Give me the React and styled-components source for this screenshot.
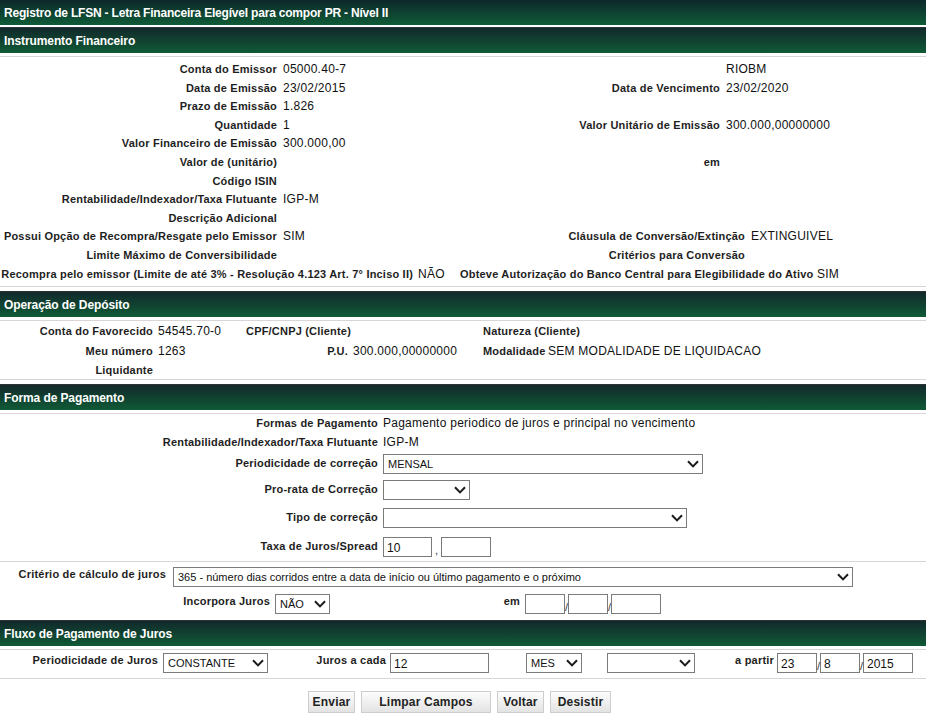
import React from "react";
import styled, { createGlobalStyle } from "styled-components";

const GlobalStyle = createGlobalStyle`
  html, body {
    margin: 0;
    padding: 0;
    background: #fff;
  }
  body {
    font-family: "Liberation Sans", Arial, sans-serif;
    color: #111;
  }
`;

const FONT = `"Liberation Sans", Arial, sans-serif`;

const Page = styled.div`
  width: 926px;
  font-family: ${FONT};
  font-size: 12px;
`;

const TitleBar = styled.div`
  height: 25px;
  display: flex;
  align-items: center;
  padding-left: 4px;
  background: linear-gradient(#0d282b, #0f5b37);
  color: #fff;
  font-weight: bold;
  font-size: 12px;
  letter-spacing: -0.2px;
  white-space: nowrap;
`;

const SectionBar = styled.div`
  box-sizing: border-box;
  height: 26px;
  margin-top: ${(p) => p.$mt ?? 4}px;
  display: flex;
  align-items: center;
  padding-left: 4px;
  border-top: 1px solid #2d3332;
  background: linear-gradient(#12292b, #0f5a36);
  color: #fff;
  font-weight: bold;
  font-size: 12px;
  letter-spacing: -0.1px;
  white-space: nowrap;
`;

const Body = styled.div`
  margin-top: 3px;
  border-top: 1px solid #d9d4d6;
  border-bottom: ${(p) => (p.$bottom ? "1px solid #d9d4d6" : "none")};
  padding: ${(p) => p.$pad || "0"};
`;

const Part = styled.div`
  border-top: ${(p) => (p.$line ? "1px solid #d9d4d6" : "none")};
  padding: ${(p) => p.$pad || "0"};
`;

const FieldGrid = styled.div`
  display: grid;
  grid-template-columns: ${(p) => p.$cols};
  grid-template-rows: ${(p) => p.$rows || "none"};
  grid-auto-rows: ${(p) => p.$rh || "18.6px"};
  column-gap: ${(p) => p.$gap ?? 6}px;
  align-items: ${(p) => p.$align || "center"};
  line-height: ${(p) => p.$lh || "18.6px"};
`;

const Label = styled.span`
  display: block;
  font-weight: bold;
  font-size: 11px;
  letter-spacing: 0.2px;
  color: #1e1e1e;
  white-space: nowrap;
  text-align: ${(p) => p.$align || "right"};
  ${(p) => (p.$w ? `width: ${p.$w}px; flex: none;` : "")}
`;

const Value = styled.span`
  display: block;
  font-size: 12px;
  letter-spacing: 0.25px;
  color: #111;
  white-space: nowrap;
`;

const Controls = styled.div`
  display: flex;
  align-items: flex-start;
  height: 20px;
`;

const FormRow = styled.div`
  display: flex;
  align-items: flex-start;
  height: 20px;
  margin-top: ${(p) => p.$mt || 0}px;
  line-height: 15px;
`;

const SelectWrap = styled.span`
  position: relative;
  display: inline-block;
  flex: none;
  width: ${(p) => p.$w}px;
  height: 20px;
  margin-left: ${(p) => p.$ml || 0}px;
`;

const SelectBox = styled.select`
  appearance: none;
  -webkit-appearance: none;
  box-sizing: border-box;
  display: block;
  width: 100%;
  height: 20px;
  margin: 0;
  padding: 0 18px 0 4px;
  border: 1px solid #7b7b7b;
  border-radius: 0;
  background: #fff;
  font-family: ${FONT};
  font-size: 11px;
  color: #111;
  outline: none;
`;

const Arrow = styled.span`
  position: absolute;
  right: 4px;
  top: 50%;
  transform: translateY(-50%);
  display: flex;
  pointer-events: none;
`;

const TextInput = styled.input`
  box-sizing: border-box;
  display: block;
  flex: none;
  width: ${(p) => p.$w}px;
  height: 20px;
  margin: 0 0 0 ${(p) => p.$ml || 0}px;
  padding: 2px 3px 0;
  border: 1px solid #7b7b7b;
  border-radius: 0;
  background: #fff;
  font-family: ${FONT};
  font-size: 12px;
  color: #111;
  outline: none;
`;

const Sep = styled.span`
  flex: none;
  width: ${(p) => p.$w || 3}px;
  height: 20px;
  text-align: center;
  font-size: 11px;
  line-height: 26px;
  color: #333;
`;

const ButtonRow = styled.div`
  display: flex;
  justify-content: center;
  gap: 6px;
  margin-top: 12px;
  padding-right: 7px;
`;

const Button = styled.button`
  box-sizing: border-box;
  width: ${(p) => p.$w}px;
  height: 22px;
  padding: 0;
  border: 1px solid #cdcdcd;
  border-radius: 0;
  background: linear-gradient(#fdfdfd, #e3e3e3);
  font-family: ${FONT};
  font-weight: bold;
  font-size: 12px;
  color: #222;
  letter-spacing: 0.2px;
`;

function Chevron() {
  return (
    <svg width="12" height="8" viewBox="0 0 12 8">
      <path d="M1 1.2 6 6.4 11 1.2" fill="none" stroke="#1b1b1b" strokeWidth="2" />
    </svg>
  );
}

function Select({ w, ml, value = "" }) {
  return (
    <SelectWrap $w={w} $ml={ml}>
      <SelectBox defaultValue={value}>
        <option value={value}>{value}</option>
      </SelectBox>
      <Arrow>
        <Chevron />
      </Arrow>
    </SelectWrap>
  );
}

function DateInputs({ ml, values = ["", "", ""] }) {
  return (
    <>
      <TextInput $w={40} $ml={ml} defaultValue={values[0]} />
      <Sep>/</Sep>
      <TextInput $w={40} defaultValue={values[1]} />
      <Sep>/</Sep>
      <TextInput $w={50} defaultValue={values[2]} />
    </>
  );
}

const instrumentoTop = [
  ["Conta do Emissor", "05000.40-7", "", "RIOBM"],
  ["Data de Emissão", "23/02/2015", "Data de Vencimento", "23/02/2020"],
  ["Prazo de Emissão", "1.826", "", ""],
  ["Quantidade", "1", "Valor Unitário de Emissão", "300.000,00000000"],
  ["Valor Financeiro de Emissão", "300.000,00", "", ""],
  ["Valor de (unitário)", "", "em", ""],
  ["Código ISIN", "", "", ""],
  ["Rentabilidade/Indexador/Taxa Flutuante", "IGP-M", "", ""],
  ["Descrição Adicional", "", "", ""],
];

const instrumentoMid = [
  ["Possui Opção de Recompra/Resgate pelo Emissor", "SIM", "Cláusula de Conversão/Extinção", "EXTINGUIVEL"],
  ["Limite Máximo de Conversibilidade", "", "Critérios para Conversão", ""],
];

const instrumentoEnd = [
  [
    "Recompra pelo emissor (Limite de até 3% - Resolução 4.123 Art. 7° Inciso II)",
    "NÃO",
    "Obteve Autorização do Banco Central para Elegibilidade do Ativo",
    "SIM",
  ],
];

const deposito = [
  ["Conta do Favorecido", "54545.70-0", "CPF/CNPJ (Cliente)", "", "Natureza (Cliente)", ""],
  ["Meu número", "1263", "P.U.", "300.000,00000000", "Modalidade", "SEM MODALIDADE DE LIQUIDACAO"],
  ["Liquidante", "", "", "", "", ""],
];

function PairRows({ rows, leftAligned = [] }) {
  return rows.map((row, r) =>
    row.map((text, c) =>
      c % 2 === 0 ? (
        <Label key={`${r}-${c}`} $align={leftAligned.includes(c) ? "left" : "right"}>
          {text}
        </Label>
      ) : (
        <Value key={`${r}-${c}`}>{text}</Value>
      )
    )
  );
}

export default function App() {
  return (
    <Page>
      <GlobalStyle />
      <TitleBar>Registro de LFSN - Letra Financeira Elegível para compor PR - Nível II</TitleBar>

      <SectionBar $mt={2}>Instrumento Financeiro</SectionBar>
      <Body $bottom $pad="3px 0 3px 0">
        <FieldGrid $cols="277px 171px 260px 1fr">
          <PairRows rows={instrumentoTop} />
        </FieldGrid>
        <FieldGrid $cols="277px 171px 285px 1fr">
          <PairRows rows={instrumentoMid} />
        </FieldGrid>
        <FieldGrid $cols="413px 37px 352px 1fr" $gap={5}>
          <PairRows rows={instrumentoEnd} />
        </FieldGrid>
      </Body>

      <SectionBar>Operação de Depósito</SectionBar>
      <Body $bottom>
        <FieldGrid
          $cols="153px 83px 102px 125px 60px 1fr"
          $gap={5}
          $rows="19px 21px 18px"
          $lh="18px"
        >
          <PairRows rows={deposito} leftAligned={[4]} />
        </FieldGrid>
      </Body>

      <SectionBar>Forma de Pagamento</SectionBar>
      <Body $pad="0 0 4px 0">
        <FieldGrid
          $cols="378px 1fr"
          $gap={5}
          $rows="19px 21px 26px 28px 29px 20px"
          $align="start"
          $lh="18px"
        >
          <Label>Formas de Pagamento</Label>
          <Value>Pagamento periodico de juros e principal no vencimento</Value>
          <Label>Rentabilidade/Indexador/Taxa Flutuante</Label>
          <Value>IGP-M</Value>
          <Label>Periodicidade de correção</Label>
          <Controls>
            <Select w={320} value="MENSAL" />
          </Controls>
          <Label>Pro-rata de Correção</Label>
          <Controls>
            <Select w={87} />
          </Controls>
          <Label>Tipo de correção</Label>
          <Controls>
            <Select w={304} />
          </Controls>
          <Label>Taxa de Juros/Spread</Label>
          <Controls>
            <TextInput $w={49} defaultValue="10" />
            <Sep $w={9}>,</Sep>
            <TextInput $w={50} defaultValue="" />
          </Controls>
        </FieldGrid>
      </Body>
      <Part $line $pad="5px 0 6px 0">
        <FormRow>
          <Label $w={166}>Critério de cálculo de juros</Label>
          <Select
            w={680}
            ml={7}
            value="365 - número dias corridos entre a data de início ou último pagamento e o próximo"
          />
        </FormRow>
        <FormRow $mt={7}>
          <Label $w={270}>Incorpora Juros</Label>
          <Select w={55} ml={5} value="NÃO" />
          <Label $w={190}>em</Label>
          <DateInputs ml={5} />
        </FormRow>
      </Part>

      <SectionBar $mt={0}>Fluxo de Pagamento de Juros</SectionBar>
      <Body $bottom $pad="3px 0 5px 0">
        <FormRow>
          <Label $w={158}>Periodicidade de Juros</Label>
          <Select w={105} ml={5} value="CONSTANTE" />
          <Label $w={118}>Juros a cada</Label>
          <TextInput $w={99} $ml={4} defaultValue="12" />
          <Select w={56} ml={37} value="MES" />
          <Select w={88} ml={25} />
          <Label $w={79}>a partir</Label>
          <DateInputs ml={3} values={["23", "8", "2015"]} />
        </FormRow>
      </Body>

      <ButtonRow>
        <Button $w={47}>Enviar</Button>
        <Button $w={130}>Limpar Campos</Button>
        <Button $w={47}>Voltar</Button>
        <Button $w={61}>Desistir</Button>
      </ButtonRow>
    </Page>
  );
}
